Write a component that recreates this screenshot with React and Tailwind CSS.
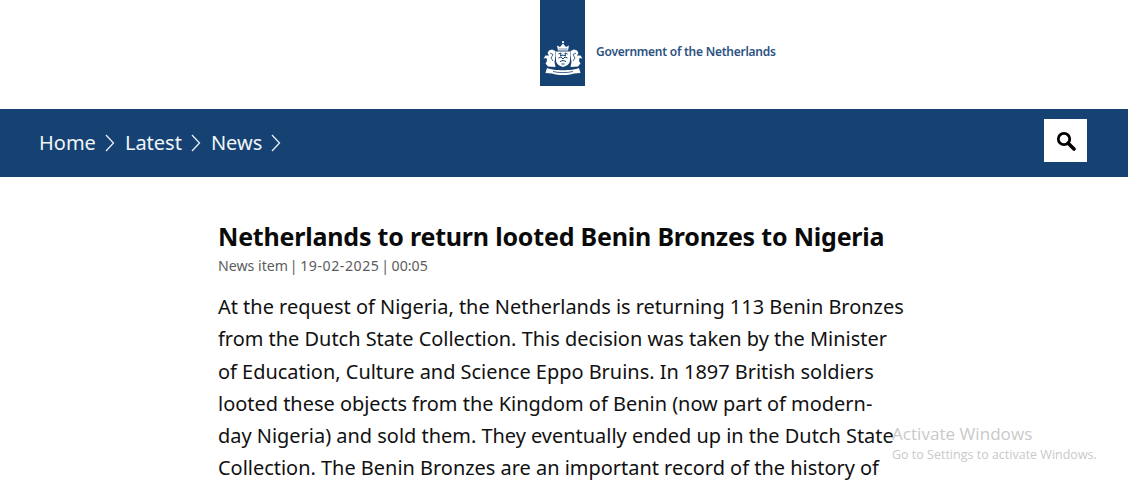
const bodyLines = [
  'At the request of Nigeria, the Netherlands is returning 113 Benin Bronzes',
  'from the Dutch State Collection. This decision was taken by the Minister',
  'of Education, Culture and Science Eppo Bruins. In 1897 British soldiers',
  'looted these objects from the Kingdom of Benin (now part of modern-',
  'day Nigeria) and sold them. They eventually ended up in the Dutch State',
  'Collection. The Benin Bronzes are an important record of the history of',
];

const crumbs = ['Home', 'Latest', 'News'];

const Crest = () => (
  <svg width="40" height="35" viewBox="0 0 40 35" fill="none">
    {/* crown */}
    <circle cx="20" cy="1.2" r="1.1" fill="#fff" />
    <path d="M15 9.5 L14 4.5 L17 6 L20 2.5 L23 6 L26 4.5 L25 9.5 Z" fill="#fff" />
    <path d="M15.5 8 H24.5" stroke="#154273" strokeWidth="0.6" />
    {/* shield */}
    <path d="M13 10.5 H27 V19 C27 23 23.5 25 20 26 C16.5 25 13 23 13 19 Z" fill="#fff" />
    <path d="M15.5 13 L18 12 L17.5 15 L20 14 L22.5 15 L22 12 L24.5 13 M15.5 17 L18 16 L20 18 L22 16 L24.5 17 M17 20.5 L20 19.5 L23 20.5 M18.5 23 L21.5 23" stroke="#154273" strokeWidth="1" />
    {/* lions */}
    <path d="M12.5 10 L9 8.5 L6 9.5 L4.5 12 L6 14.5 L2.5 14.5 L0.5 17.5 L3.5 17 L4 20 L2.5 22.5 L5 25.5 L12.5 26 L11.5 21 L12.5 15 Z" fill="#fff" />
    <path d="M27.5 10 L31 8.5 L34 9.5 L35.5 12 L34 14.5 L37.5 14.5 L39.5 17.5 L36.5 17 L36 20 L37.5 22.5 L35 25.5 L27.5 26 L28.5 21 L27.5 15 Z" fill="#fff" />
    <path d="M7 12 L10 13.5 L8 17 L10 20 M33 12 L30 13.5 L32 17 L30 20" stroke="#154273" strokeWidth="0.8" />
    {/* ribbon */}
    <path d="M4 27 C10 30 30 30 36 27 L37.5 32 L31 32.5 C24 34.5 16 34.5 9 32.5 L2.5 32 Z" fill="#fff" />
    <path d="M10 30.5 C16 32 24 32 30 30.5" stroke="#154273" strokeWidth="0.8" />
  </svg>
);

const Chevron = () => (
  <svg width="10" height="18" viewBox="0 0 10 18" fill="none" className="ml-[9px] mr-[10px]">
    <path d="M1 1 L8.5 9 L1 17" stroke="#e8eef4" strokeWidth="1.3" />
  </svg>
);

export default function App() {
  return (
    <div className="relative h-[484px] w-[1128px] overflow-hidden bg-white font-['Noto_Sans','Open_Sans',sans-serif]">
      <header className="flex h-[109px] items-start pl-[540px]">
        <div className="flex h-[86px] w-[45px] items-end justify-center bg-[#154273] pb-[10px]">
          <Crest />
        </div>
        <span className="ml-[11px] mt-[43px] whitespace-nowrap text-[12px] font-semibold leading-[18px] tracking-[-0.25px] text-[#2c5282]">
          Government of the Netherlands
        </span>
      </header>

      <nav className="flex h-[68px] items-start justify-between bg-[#154273] pl-[39px] pr-[41px] pt-[10px]">
        <ol className="flex h-[48px] items-center text-[20px] text-[#f1f5f9]">
          {crumbs.map((crumb) => (
            <li key={crumb} className="flex items-center">
              {crumb}
              <Chevron />
            </li>
          ))}
        </ol>
        <button className="flex h-[43px] w-[43px] items-center justify-center bg-white">
          <svg width="20" height="20" viewBox="0 0 20 20" fill="none">
            <circle cx="8" cy="8" r="5.7" stroke="#000" strokeWidth="2.8" />
            <path d="M12.2 12.2 L18 18" stroke="#000" strokeWidth="3.6" strokeLinecap="round" />
          </svg>
        </button>
      </nav>

      <main className="ml-[218px] w-[700px] pt-[41px]">
        <h1 className="whitespace-nowrap text-[25px] font-bold leading-[36px] tracking-[-0.2px] text-[#0a0a0a]">
          Netherlands to return looted Benin Bronzes to Nigeria
        </h1>
        <p className="mt-[2px] whitespace-nowrap text-[14.15px] leading-[20px] text-[#5c5c5c]">
          News item <span className="ml-[-2px] mr-[2px]">|</span>{' '}
          <span className="ml-[-3px] mr-[-2px] tracking-[0.55px]">19-02-2025</span>{' '}
          <span className="mr-[-1px]">|</span> 00:05
        </p>
        <div className="mt-[15px] text-[19.95px] leading-[32.3px] text-[#111]">
          {bodyLines.map((line) => (
            <p key={line} className="whitespace-nowrap">{line}</p>
          ))}
        </div>
      </main>

      {/* windows watermark */}
      <div className="absolute left-[892px] top-[422px] font-['Open_Sans',sans-serif] text-[#c9c9c9]">
        <p className="text-[17.1px] leading-[24px]">Activate Windows</p>
        <p className="text-[12.5px] leading-[18px]">Go to Settings to activate Windows.</p>
      </div>
    </div>
  );
}
